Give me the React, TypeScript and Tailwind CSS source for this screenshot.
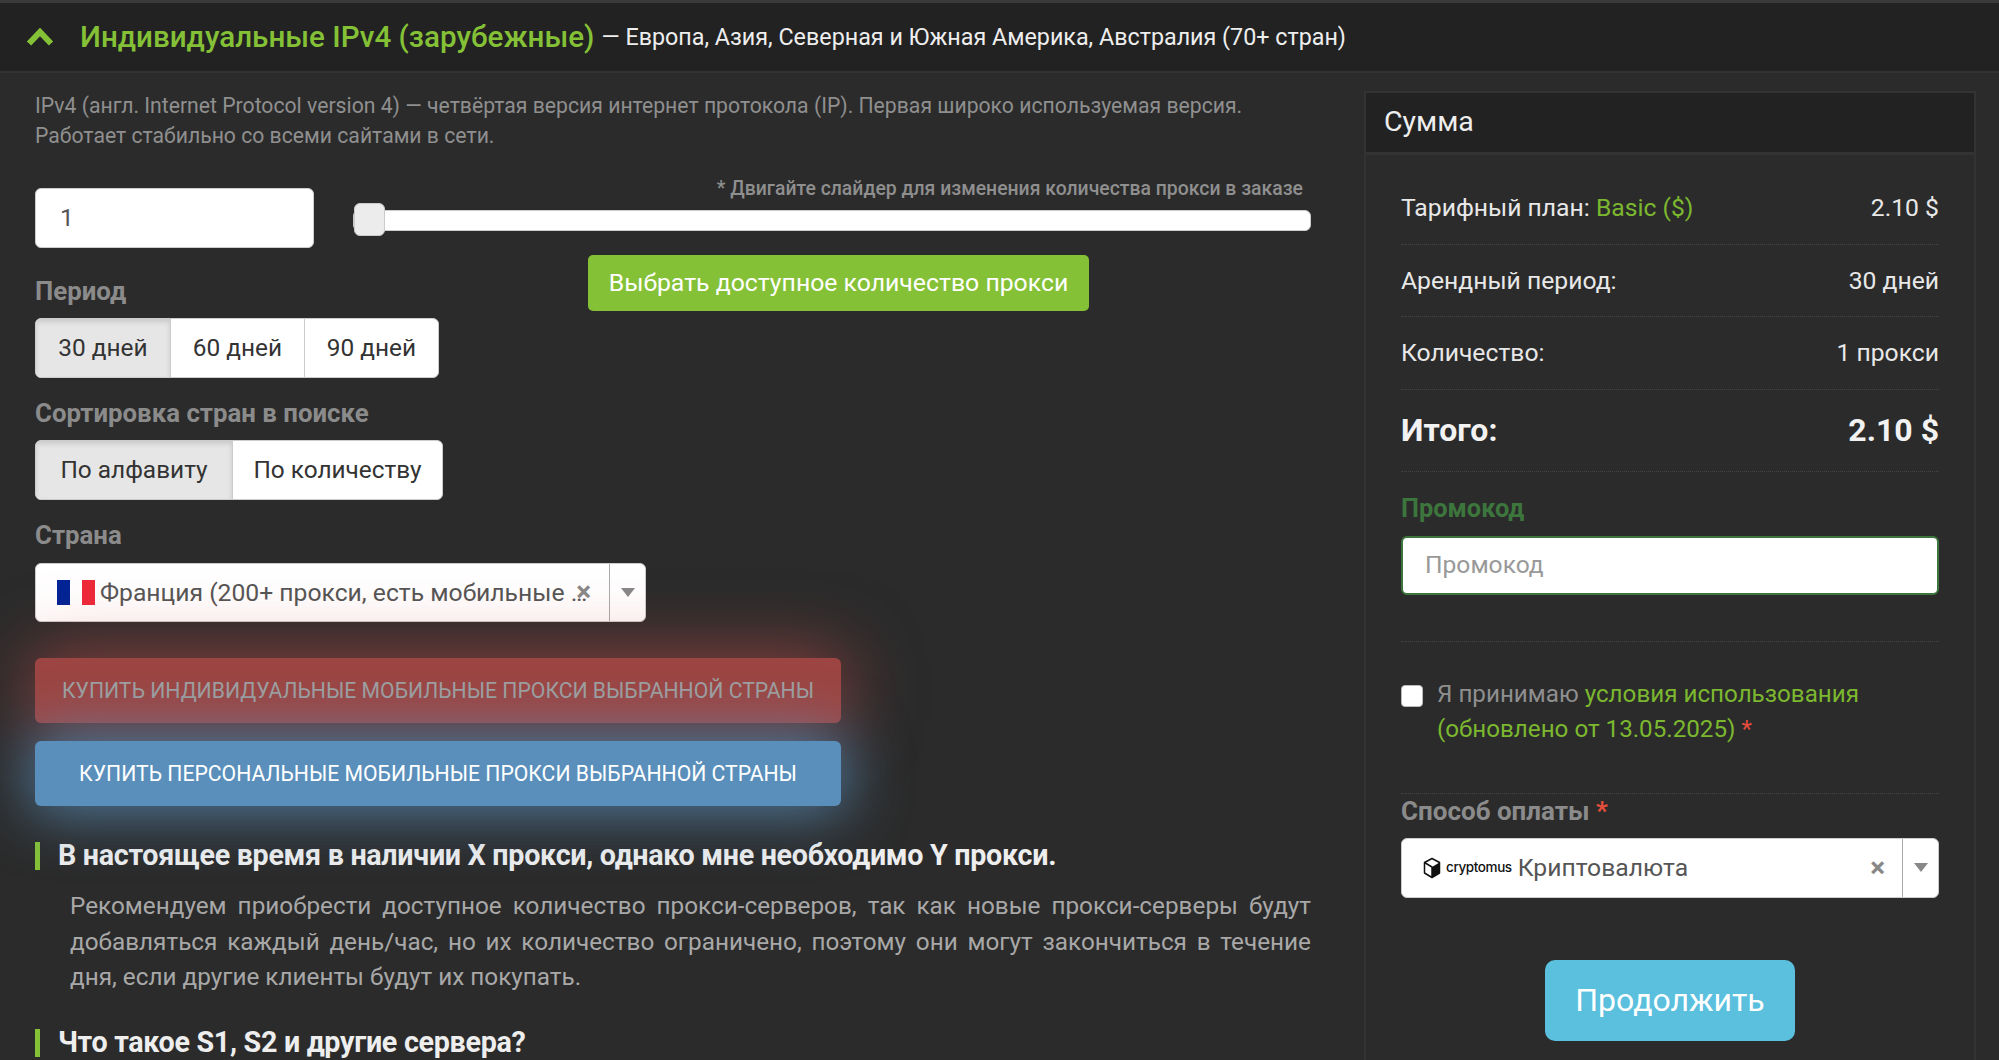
import React from 'react';

function Chevron() {
  return (
    <svg width="28" height="18" viewBox="0 0 28 18" className="shrink-0">
      <polyline points="3,15.5 14,4 25,15.5" fill="none" stroke="#85c136" strokeWidth="6" />
    </svg>
  );
}

function Caret() {
  return <span className="w-0 h-0 border-x-[7px] border-x-transparent border-t-[9px] border-t-[#888]" />;
}

function CubeLogo() {
  return (
    <svg width="18" height="22" viewBox="0 0 18 22" className="shrink-0">
      <path d="M9 1.5 L16.5 5.5 V16 L9 20.5 L1.5 16 V5.5 Z" fill="#fff" stroke="#111" strokeWidth="1.5" strokeLinejoin="round" />
      <path d="M9 10 L16.5 5.5 V16 L9 20.5 Z" fill="#111" />
      <path d="M1.5 5.5 L9 10 V20.5" fill="none" stroke="#111" strokeWidth="1.5" />
    </svg>
  );
}

function SegmentGroup({ items }: { items: { label: string; width: string; active?: boolean }[] }) {
  return (
    <div className="flex w-fit h-[60px] rounded-[6px] overflow-hidden border border-[#ccc] bg-white text-[24.4px] text-[#333]">
      {items.map((item, i) => (
        <div
          key={item.label}
          className={`flex items-center justify-center ${item.width} ${i > 0 ? 'border-l border-[#ccc]' : ''} ${
            item.active ? 'bg-[#e6e6e6] shadow-[inset_0_3px_5px_rgba(0,0,0,0.125)]' : ''
          }`}
        >
          {item.label}
        </div>
      ))}
    </div>
  );
}

function SummaryRow({ label, value }: { label: React.ReactNode; value: string }) {
  return (
    <div className="flex justify-between items-center h-[72.5px] border-b border-dotted border-[#444] text-[24.7px] text-[#e8e8e8]">
      <span>{label}</span>
      <span>{value}</span>
    </div>
  );
}

function Faq({ title, children }: { title: string; children?: React.ReactNode }) {
  return (
    <div>
      <h3 className="border-l-[5px] border-[#85c136] pl-[18px] h-[28px] flex items-center text-[28.7px] font-bold text-[#eee] tracking-[-0.3px] whitespace-nowrap">
        {title}
      </h3>
      {children}
    </div>
  );
}

export default function App() {
  return (
    <div className="h-[1060px] overflow-hidden bg-[#2b2b2b] [font-family:Roboto,sans-serif]">
      {/* Header */}
      <div className="h-[73px] flex items-center pl-[26px] bg-[#222] border-t-[3px] border-t-[#3a3a3a] border-b-[2px] border-b-[#333]">
        <Chevron />
        <span className="ml-[26px] text-[29.6px] font-medium text-[#85c136]">Индивидуальные IPv4 (зарубежные)</span>
        <span className="ml-[7px] text-[23.3px] text-[#eee]">— Европа, Азия, Северная и Южная Америка, Австралия (70+ стран)</span>
      </div>

      <div className="flex items-start pl-[35px]">
        {/* Left column */}
        <div className="w-[1276px] shrink-0 flex flex-col">
          <p className="mt-[18px] text-[21.2px] leading-[30px] text-[#8f8f8f]">
            IPv4 (англ. Internet Protocol version 4) — четвёртая версия интернет протокола (IP). Первая широко используемая версия.
            <br />
            Работает стабильно со всеми сайтами в сети.
          </p>

          <div className="flex items-start mt-[37px]">
            <div className="w-[279px] h-[60px] rounded-[6px] bg-white border border-[#ccc] flex items-center pl-[24px] text-[24.6px] text-[#555]">
              1
            </div>
            <div className="flex-1 ml-[39px] flex flex-col">
              <div className="text-right pr-[8px] text-[19.4px] font-medium leading-[20px] text-[#8f8f8f] h-[15px] -translate-y-[9px]">
                * Двигайте слайдер для изменения количества прокси в заказе
              </div>
              <div className="relative h-[21px] mt-[7px] rounded-r-[6px] rounded-l-[6px] bg-white border border-[#ccc]">
                <div className="absolute left-0 top-[-8px] w-[31px] h-[33px] rounded-[6px] bg-[#ececec] border border-[#ccc]" />
              </div>
              <div className="self-center mt-[24px] ml-[13px] w-[501px] h-[56px] rounded-[5px] bg-[#85c136] flex items-center justify-center text-[24.8px] text-white">
                Выбрать доступное количество прокси
              </div>
            </div>
          </div>

          <div className="mt-[-33px] h-[26px] flex items-center text-[25.8px] font-bold text-[#8b8b8b]">Период</div>
          <div className="mt-[14px]">
            <SegmentGroup
              items={[
                { label: '30 дней', width: 'w-[134px]', active: true },
                { label: '60 дней', width: 'w-[134px]' },
                { label: '90 дней', width: 'w-[134px]' },
              ]}
            />
          </div>

          <div className="mt-[22px] h-[26px] flex items-center text-[25.8px] font-bold text-[#8b8b8b]">Сортировка стран в поиске</div>
          <div className="mt-[14px]">
            <SegmentGroup
              items={[
                { label: 'По алфавиту', width: 'w-[196px]', active: true },
                { label: 'По количеству', width: 'w-[210px]' },
              ]}
            />
          </div>

          <div className="mt-[22px] h-[26px] flex items-center text-[25.8px] font-bold text-[#8b8b8b]">Страна</div>
          <div className="relative mt-[15px] w-[611px] h-[59px] rounded-[6px] bg-white border border-[#ccc] flex items-center text-[24.7px] text-[#555]">
            <span className="ml-[21px] flex w-[38px] h-[25px] shrink-0">
              <span className="flex-1 bg-[#002395]" />
              <span className="flex-1 bg-white" />
              <span className="flex-1 bg-[#ed2939]" />
            </span>
            <span className="ml-[5px] flex-1 min-w-0 truncate pr-[16px]">Франция (200+ прокси, есть мобильные прокси)</span>
            <span className="absolute right-[54px] top-[14px] text-[28px] font-bold leading-none text-[#888]">×</span>
            <span className="w-[36px] h-full shrink-0 border-l border-[#aaa] flex items-center justify-center">
              <Caret />
            </span>
          </div>

          <div className="mt-[36px] w-[806px] h-[65px] rounded-[6px] bg-[#d9534f] opacity-65 shadow-[0_0_70px_5px_rgba(217,83,79,0.85)] flex items-center justify-center text-[21.2px] text-[#ddd]">
            КУПИТЬ ИНДИВИДУАЛЬНЫЕ МОБИЛЬНЫЕ ПРОКСИ ВЫБРАННОЙ СТРАНЫ
          </div>
          <div className="relative mt-[18px] w-[806px] h-[65px] rounded-[6px] bg-[#5a8fbb] shadow-[0_0_60px_5px_rgba(91,143,187,0.85)] flex items-center justify-center text-[21.2px] text-white">
            КУПИТЬ ПЕРСОНАЛЬНЫЕ МОБИЛЬНЫЕ ПРОКСИ ВЫБРАННОЙ СТРАНЫ
          </div>

          <div className="mt-[36px]">
            <Faq title="В настоящее время в наличии X прокси, однако мне необходимо Y прокси.">
              <p className="mt-[18px] pl-[35px] text-[24.3px] leading-[35.5px] text-[#a8a8a8] text-justify">
                Рекомендуем приобрести доступное количество прокси-серверов, так как новые прокси-серверы будут добавляться каждый день/час, но их количество ограничено, поэтому они могут закончиться в течение дня, если другие клиенты будут их покупать.
              </p>
            </Faq>
          </div>
          <div className="mt-[34px]">
            <Faq title="Что такое S1, S2 и другие сервера?" />
          </div>
        </div>

        {/* Summary card */}
        <div className="ml-[53px] mt-[18px] w-[612px] h-[1100px] shrink-0 border-2 border-[#333]">
          <div className="h-[62px] flex items-center pl-[18px] bg-[#222] border-b-[3px] border-[#333] text-[28.5px] text-[#eee]">Сумма</div>
          <div className="px-[35px] pt-[17px] flex flex-col">
            <SummaryRow
              label={
                <>
                  Тарифный план: <span className="text-[#7cb82f]">Basic ($)</span>
                </>
              }
              value="2.10 $"
            />
            <SummaryRow label="Арендный период:" value="30 дней" />
            <SummaryRow label="Количество:" value="1 прокси" />
            <div className="flex justify-between items-center h-[82px] border-b border-dotted border-[#444] text-[32px] font-bold text-[#f2f2f2]">
              <span>Итого:</span>
              <span>2.10 $</span>
            </div>
            <div className="mt-[24px] h-[26px] flex items-center text-[25.4px] font-bold text-[#3c763d]">Промокод</div>
            <div className="mt-[14px] h-[59px] rounded-[6px] bg-white border-2 border-[#3c763d] flex items-center pl-[22px] text-[24.6px] text-[#999]">
              Промокод
            </div>
            <div className="mt-[46px] border-t border-dotted border-[#444]" />
            <div className="mt-[42px] flex items-start">
              <span className="mt-[1px] w-[22px] h-[22px] shrink-0 rounded-[4px] bg-white border border-[#bbb]" />
              <p className="ml-[14px] text-[24.2px] leading-[35px] text-[#8f8f8f] -mt-[7px]">
                Я принимаю <span className="text-[#7cb82f]">условия использования</span>
                <br />
                <span className="text-[#7cb82f]">(обновлено от 13.05.2025)</span> <span className="text-[#e74c3c]">*</span>
              </p>
            </div>
            <div className="mt-[46px] border-t border-dotted border-[#444]" />
            <div className="mt-[5px] h-[26px] flex items-center text-[26px] font-bold text-[#8b8b8b]">
              Способ оплаты&nbsp;<span className="text-[#e74c3c]">*</span>
            </div>
            <div className="mt-[13px] h-[60px] rounded-[6px] bg-white border border-[#ccc] flex items-center text-[24.7px] text-[#555]">
              <span className="ml-[21px] flex items-center gap-[5px] shrink-0">
                <CubeLogo />
                <span className="text-[13.5px] font-medium text-[#111] [font-family:Inter,sans-serif] tracking-[-0.4px]">cryptomus</span>
              </span>
              <span className="ml-[6px] flex-1">Криптовалюта</span>
              <span className="mr-[17px] text-[28px] font-bold leading-none text-[#888]">×</span>
              <span className="w-[36px] h-full border-l border-[#aaa] flex items-center justify-center">
                <Caret />
              </span>
            </div>
            <div className="mt-[62px] self-center w-[250px] h-[81px] rounded-[10px] bg-[#5bc0de] flex items-center justify-center text-[32px] text-white">
              Продолжить
            </div>
          </div>
        </div>
      </div>
    </div>
  );
}
